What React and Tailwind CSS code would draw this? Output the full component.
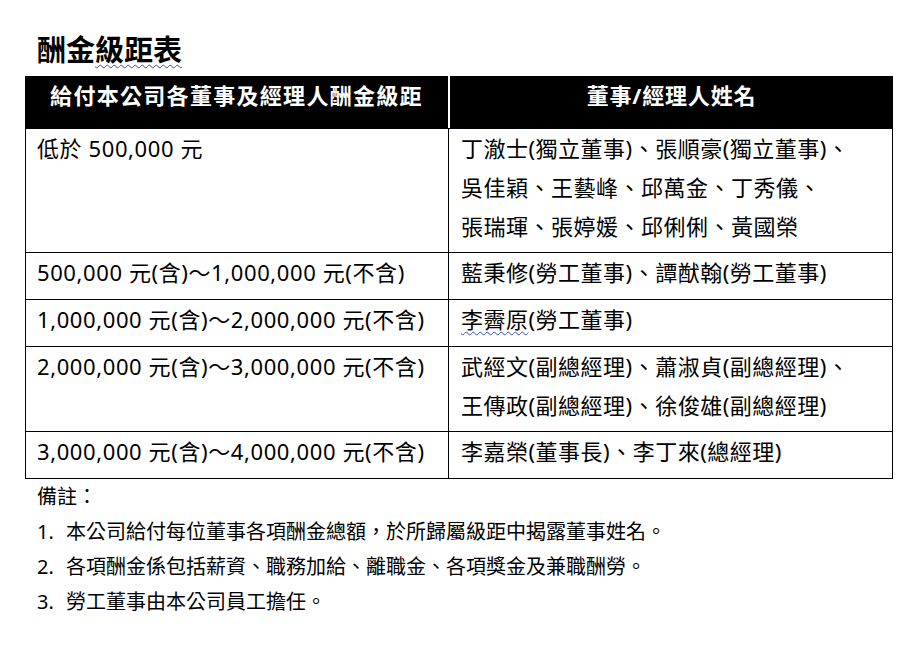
import React from 'react';

const font = { fontFamily: '"Noto Sans", "Noto Sans CJK TC", sans-serif' };

const wavy = 'underline decoration-wavy decoration-[color:#2f4fd8] decoration-1 underline-offset-[3px]';

const rows = [
  { range: '低於 500,000 元', names: ['丁澈士(獨立董事)、張順豪(獨立董事)、', '吳佳穎、王藝峰、邱萬金、丁秀儀、', '張瑞琿、張婷媛、邱俐俐、黃國榮'] },
  { range: '500,000 元(含)～1,000,000 元(不含)', names: ['藍秉修(勞工董事)、譚猷翰(勞工董事)'] },
  { range: '1,000,000 元(含)～2,000,000 元(不含)', names: [<><span className={wavy}>李霽原</span>(勞工董事)</>] },
  { range: '2,000,000 元(含)～3,000,000 元(不含)', names: ['武經文(副總經理)、蕭淑貞(副總經理)、', '王傳政(副總經理)、徐俊雄(副總經理)'] },
  { range: '3,000,000 元(含)～4,000,000 元(不含)', names: ['李嘉榮(董事長)、李丁來(總經理)'] },
];

const notes = [
  '本公司給付每位董事各項酬金總額，於所歸屬級距中揭露董事姓名。',
  '各項酬金係包括薪資、職務加給、離職金、各項獎金及兼職酬勞。',
  '勞工董事由本公司員工擔任。',
];

export default function App() {
  return (
    <div className="w-[920px] h-[666px] bg-white text-black overflow-hidden" style={font}>
      {/* Title */}
      <h1 className="pt-[30px] pl-[37px] text-[29px] leading-[40px] font-bold">
        酬金<span className={wavy}>級距表</span>
      </h1>

      <div className="ml-[25px] mt-[6px] w-[868px]">
        {/* Header */}
        <div className="flex h-[52px] text-white font-bold text-[22px] leading-[39px]">
          <div className="w-[423px] bg-black text-center tracking-[1.3px]">給付本公司各董事及經理人酬金級距</div>
          <div className="w-[2px] bg-white"></div>
          <div className="flex-1 bg-black text-center tracking-[0.8px]">董事/經理人姓名</div>
        </div>

        {/* Body */}
        <div className="border border-black text-[22px] leading-[39px]">
          {rows.map((r, i) => (
            <div key={i} className={`flex ${i > 0 ? 'border-t border-black' : ''}`}>
              <div className="w-[423px] border-r border-black pl-[11px] pb-[7px] tracking-[0.6px]">{r.range}</div>
              <div className="flex-1 pl-[12px] pb-[6px] tracking-[0.5px]">
                {r.names.map((n, j) => (
                  <div key={j}>{n}</div>
                ))}
              </div>
            </div>
          ))}
        </div>
      </div>

      {/* Notes */}
      <div className="pl-[37px] text-[20px] leading-[35px]">
        <div>備註：</div>
        {notes.map((n, i) => (
          <div key={i} className="flex">
            <span className="w-[29px]">{i + 1}.</span>
            <span>{n}</span>
          </div>
        ))}
      </div>
    </div>
  );
}
